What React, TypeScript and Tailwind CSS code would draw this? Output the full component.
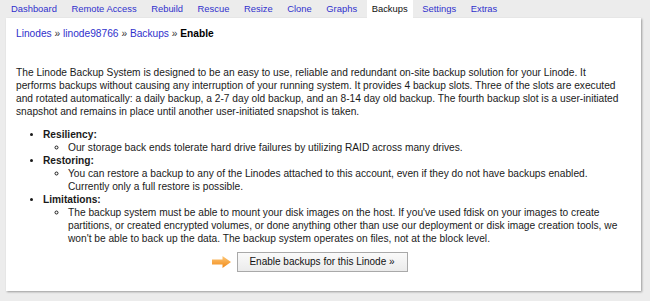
import React from "react";

const tabs = [
  "Dashboard",
  "Remote Access",
  "Rebuild",
  "Rescue",
  "Resize",
  "Clone",
  "Graphs",
  "Backups",
  "Settings",
  "Extras",
];

function Arrow() {
  return (
    <svg width="19" height="12" viewBox="0 0 19 12">
      <defs>
        <linearGradient id="arr" x1="0" y1="0" x2="0" y2="1">
          <stop offset="0" stopColor="#fdc777" />
          <stop offset="1" stopColor="#f28a17" />
        </linearGradient>
      </defs>
      <path d="M0 3.5H10.5V0L19 6L10.5 12V8.5H0Z" fill="url(#arr)" />
    </svg>
  );
}

export default function App() {
  return (
    <div className="min-h-screen bg-[#ececec] font-['Liberation_Sans',Arial,sans-serif] text-[10.2px] text-[#1a1a1a]">
      {/* Tabs */}
      <div className="flex h-[18px] gap-[4.6px] pl-[6px] text-[9.4px]">
        {tabs.map((t) =>
          t === "Backups" ? (
            <span key={t} className="bg-white px-[5px] leading-[18px] text-[#111]">
              {t}
            </span>
          ) : (
            <a key={t} href="#" className="px-[5px] leading-[18px] text-[#3030cc]">
              {t}
            </a>
          )
        )}
      </div>

      {/* Panel */}
      <div className="ml-[6px] mr-[9px] bg-white pl-[10px] pr-[13px] pt-[9px] pb-[19px] shadow-[1px_1px_2px_rgba(0,0,0,0.35)]">
        <div className="leading-[13px]">
          <a href="#" className="text-[#3030cc]">Linodes</a>
          <span className="text-[#333]"> » </span>
          <a href="#" className="text-[#3030cc]">linode98766</a>
          <span className="text-[#333]"> » </span>
          <a href="#" className="text-[#3030cc]">Backups</a>
          <span className="text-[#333]"> » </span>
          <b className="text-black">Enable</b>
        </div>

        <p className="mt-[26px] leading-[13px]">
          The Linode Backup System is designed to be an easy to use, reliable and redundant on-site
          backup solution for your Linode. It performs backups without causing any interruption of
          your running system. It provides 4 backup slots. Three of the slots are executed and
          rotated automatically: a daily backup, a 2-7 day old backup, and an 8-14 day old backup.
          The fourth backup slot is a user-initiated snapshot and remains in place until another
          user-initiated snapshot is taken.
        </p>

        <ul className="mt-[10px] list-disc pl-[27px] leading-[13px]">
          <li>
            <b>Resiliency:</b>
            <ul className="list-[circle] pl-[25px]">
              <li>Our storage back ends tolerate hard drive failures by utilizing RAID across many drives.</li>
            </ul>
          </li>
          <li>
            <b>Restoring:</b>
            <ul className="list-[circle] pl-[25px]">
              <li>
                You can restore a backup to any of the Linodes attached to this account, even if they do
                not have backups enabled. Currently only a full restore is possible.
              </li>
            </ul>
          </li>
          <li>
            <b>Limitations:</b>
            <ul className="list-[circle] pl-[25px]">
              <li>
                The backup system must be able to mount your disk images on the host. If you've used
                fdisk on your images to create partitions, or created encrypted volumes, or done
                anything other than use our deployment or disk image creation tools, we won't be able
                to back up the data. The backup system operates on files, not at the block level.
              </li>
            </ul>
          </li>
        </ul>

        <div className="mt-[6.5px] grid grid-cols-[1fr_auto_1fr] items-center">
          <div className="flex justify-end pr-[6px]">
            <Arrow />
          </div>
          <button className="h-[20px] w-[171px] border border-[#a9a9a9] bg-linear-to-b from-[#fafafa] to-[#ebebeb] text-[10px] text-[#111]">
            Enable backups for this Linode »
          </button>
          <div />
        </div>
      </div>
    </div>
  );
}
